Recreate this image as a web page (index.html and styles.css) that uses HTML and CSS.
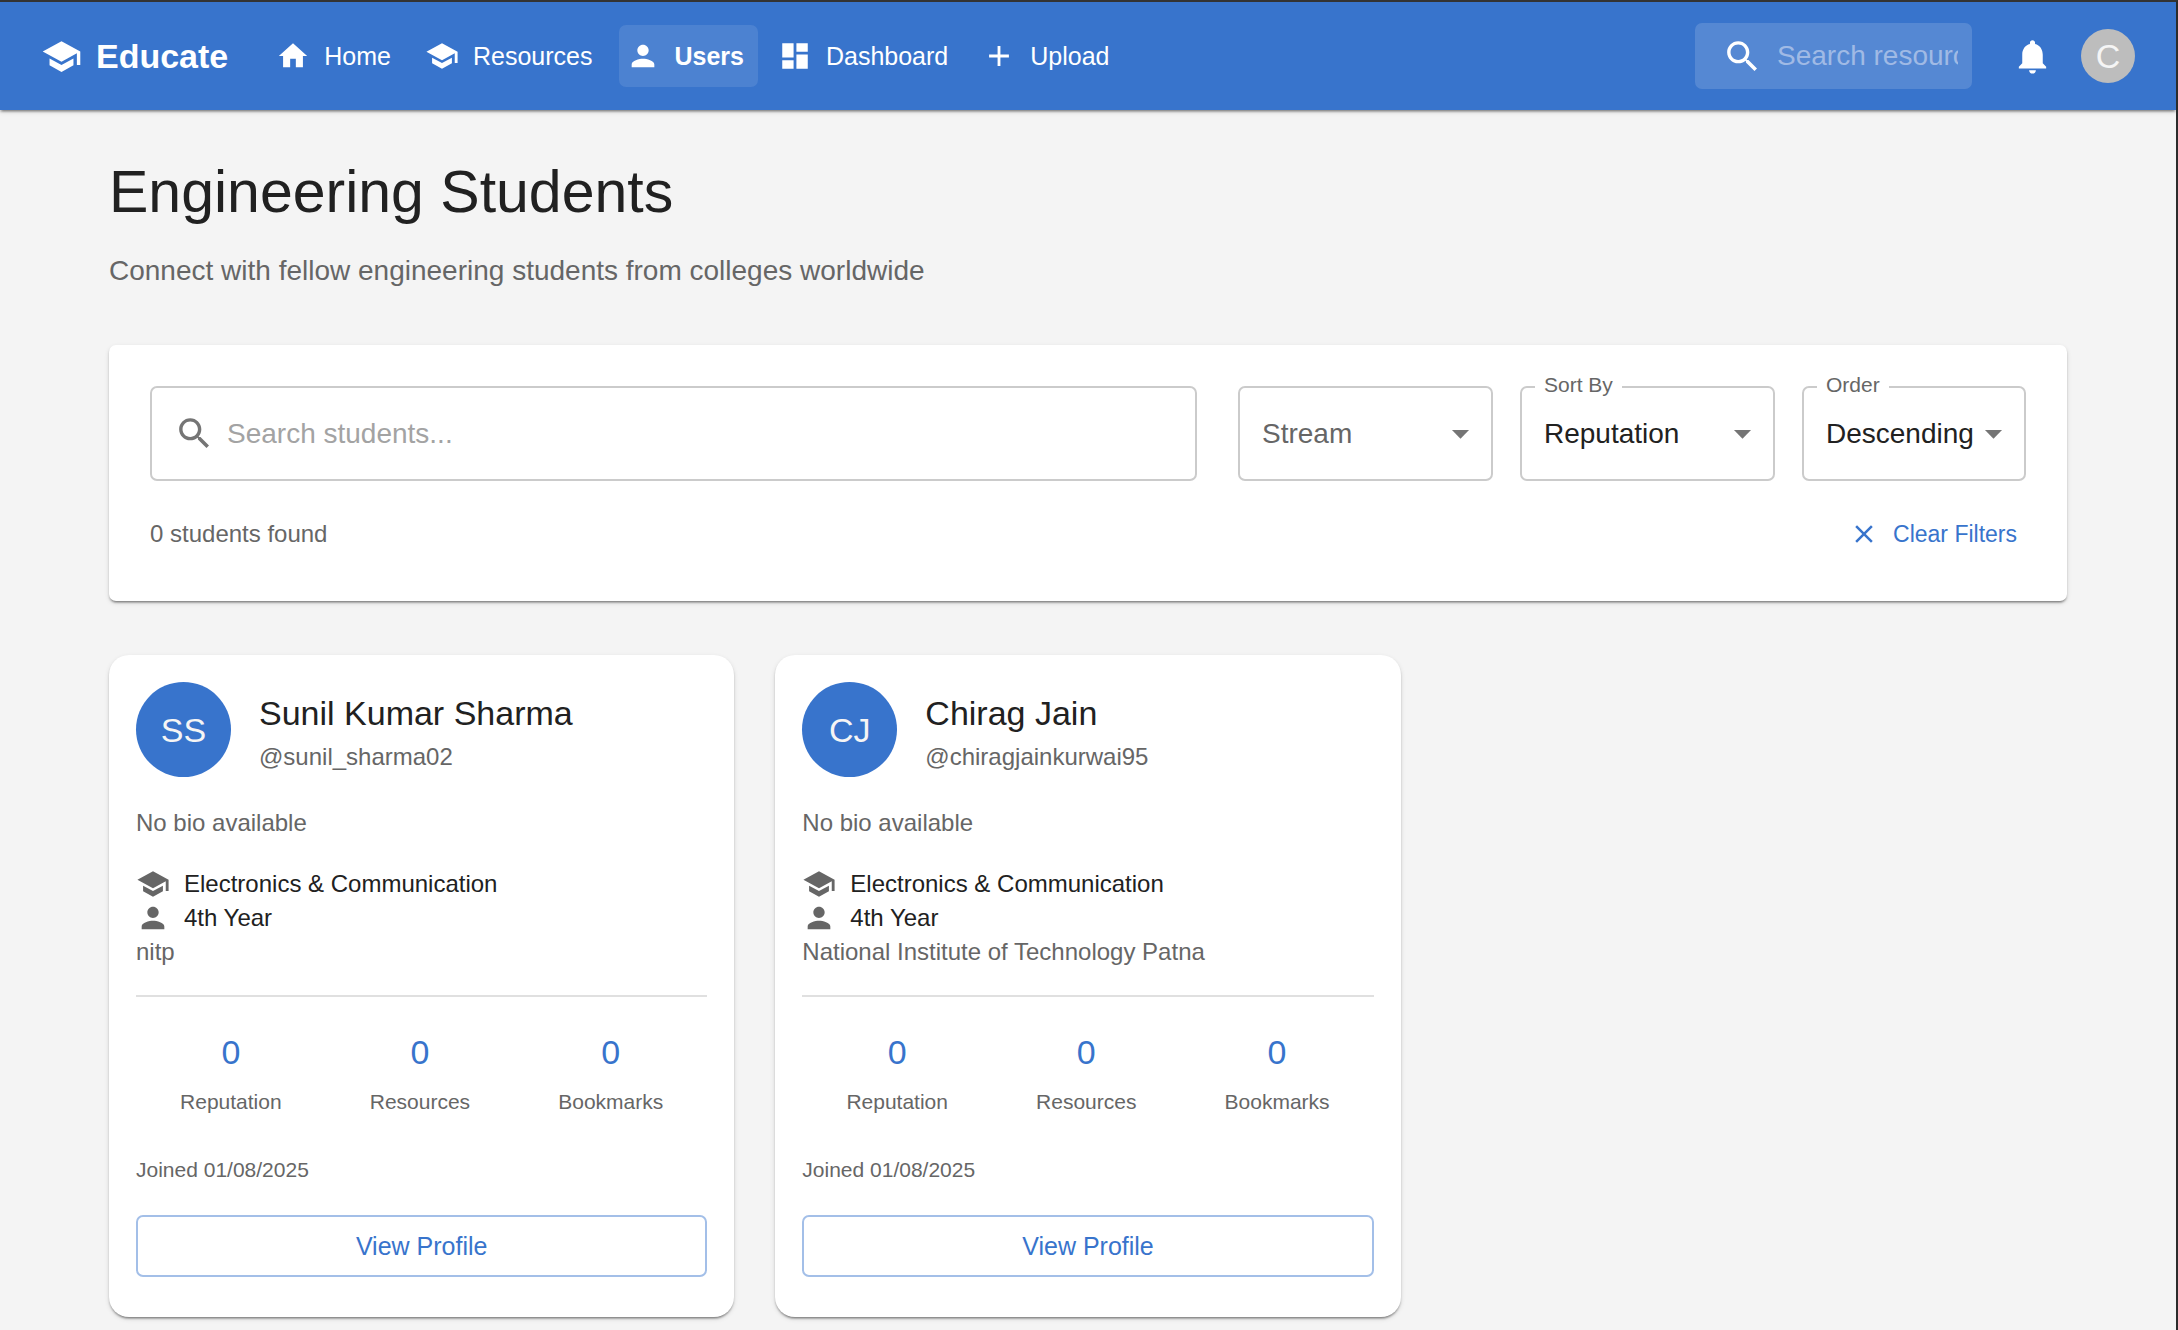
FILE: index.html
```html
<!DOCTYPE html>
<html lang="en">
<head>
<meta charset="utf-8">
<meta name="viewport" content="width=device-width, initial-scale=1">
<title>Educate - Engineering Students</title>
<link rel="stylesheet" href="styles.css">
</head>
<body>
<svg class="sprite" aria-hidden="true">
  <symbol id="school" viewBox="0 0 24 24"><path d="M5 13.18v4L12 21l7-3.82v-4L12 17l-7-3.82zM12 3 1 9l11 6 9-4.91V17h2V9L12 3z"/></symbol>
  <symbol id="home" viewBox="0 0 24 24"><path d="M10 20v-6h4v6h5v-8h3L12 3 2 12h3v8z"/></symbol>
  <symbol id="person" viewBox="0 0 24 24"><path d="M12 12c2.21 0 4-1.79 4-4s-1.79-4-4-4-4 1.79-4 4 1.79 4 4 4zm0 2c-2.67 0-8 1.34-8 4v2h16v-2c0-2.66-5.33-4-8-4z"/></symbol>
  <symbol id="dashboard" viewBox="0 0 24 24"><path d="M3 13h8V3H3v10zm0 8h8v-6H3v6zm10 0h8V11h-8v10zm0-18v6h8V3h-8z"/></symbol>
  <symbol id="add" viewBox="0 0 24 24"><path d="M19 13h-6v6h-2v-6H5v-2h6V5h2v6h6v2z"/></symbol>
  <symbol id="search" viewBox="0 0 24 24"><path d="M15.5 14h-.79l-.28-.27C15.41 12.59 16 11.11 16 9.5 16 5.91 13.09 3 9.5 3S3 5.91 3 9.5 5.91 16 9.5 16c1.61 0 3.09-.59 4.23-1.57l.27.28v.79l5 4.99L20.49 19l-4.99-5zm-6 0C7.01 14 5 11.99 5 9.5S7.01 5 9.5 5 14 7.01 14 9.5 11.99 14 9.5 14z"/></symbol>
  <symbol id="bell" viewBox="0 0 24 24"><path d="M12 22c1.1 0 2-.9 2-2h-4c0 1.1.89 2 2 2zm6-6v-5c0-3.07-1.64-5.64-4.5-6.32V4c0-.83-.67-1.5-1.5-1.5s-1.5.67-1.5 1.5v.68C7.63 5.36 6 7.92 6 11v5l-2 2v1h16v-1l-2-2z"/></symbol>
  <symbol id="clear" viewBox="0 0 24 24"><path d="M19 6.41 17.59 5 12 10.59 6.41 5 5 6.41 10.59 12 5 17.59 6.41 19 12 13.41 17.59 19 19 17.59 13.41 12z"/></symbol>
  <symbol id="caret" viewBox="0 0 24 24"><path d="m7 10 5 5 5-5z"/></symbol>
</svg>

<header class="appbar">
  <a class="brand" href="#"><svg class="icon icon-lg"><use href="#school"/></svg>Educate</a>
  <nav class="nav">
    <a class="nav-link" href="#"><svg class="icon"><use href="#home"/></svg>Home</a>
    <a class="nav-link" href="#"><svg class="icon"><use href="#school"/></svg>Resources</a>
    <a class="nav-link active" href="#" aria-current="page"><svg class="icon"><use href="#person"/></svg>Users</a>
    <a class="nav-link" href="#"><svg class="icon"><use href="#dashboard"/></svg>Dashboard</a>
    <a class="nav-link" href="#"><svg class="icon"><use href="#add"/></svg>Upload</a>
  </nav>
  <div class="appbar-tools">
    <label class="appbar-search"><svg class="icon icon-lg"><use href="#search"/></svg><input type="text" placeholder="Search resources..." aria-label="Search resources"></label>
    <button class="icon-button" type="button" aria-label="Notifications"><svg class="icon icon-lg"><use href="#bell"/></svg></button>
    <button class="account" type="button" aria-label="Account">C</button>
  </div>
</header>

<main class="container">
  <h1 class="title">Engineering Students</h1>
  <p class="subtitle">Connect with fellow engineering students from colleges worldwide</p>

  <form class="filters">
    <div class="filter-fields">
      <label class="search-field"><svg class="icon icon-lg"><use href="#search"/></svg><input type="text" placeholder="Search students..." aria-label="Search students"></label>
      <div class="select-group">
        <div class="select-field">
          <select class="empty" aria-label="Stream"><option>Stream</option></select>
          <svg class="icon icon-lg caret"><use href="#caret"/></svg>
        </div>
        <div class="select-field">
          <label class="floating-label" for="sort">Sort By</label>
          <select id="sort"><option>Reputation</option></select>
          <svg class="icon icon-lg caret"><use href="#caret"/></svg>
        </div>
        <div class="select-field">
          <label class="floating-label" for="order">Order</label>
          <select id="order"><option>Descending</option></select>
          <svg class="icon icon-lg caret"><use href="#caret"/></svg>
        </div>
      </div>
    </div>
    <div class="filter-summary">
      <p class="count">0 students found</p>
      <button class="clear" type="reset"><svg class="icon icon-sm"><use href="#clear"/></svg>Clear Filters</button>
    </div>
  </form>

  <section class="cards">
    <article class="card">
      <div class="card-head">
        <div class="avatar">SS</div>
        <div>
          <h2 class="name">Sunil Kumar Sharma</h2>
          <p class="muted">@sunil_sharma02</p>
        </div>
      </div>
      <p class="bio muted">No bio available</p>
      <p class="fact"><svg class="icon"><use href="#school"/></svg>Electronics &amp; Communication</p>
      <p class="fact"><svg class="icon"><use href="#person"/></svg>4th Year</p>
      <p class="muted">nitp</p>
      <hr class="divider">
      <dl class="stats">
        <div class="stat"><dt>Reputation</dt><dd>0</dd></div>
        <div class="stat"><dt>Resources</dt><dd>0</dd></div>
        <div class="stat"><dt>Bookmarks</dt><dd>0</dd></div>
      </dl>
      <p class="joined">Joined 01/08/2025</p>
      <button class="profile" type="button">View Profile</button>
    </article>

    <article class="card">
      <div class="card-head">
        <div class="avatar">CJ</div>
        <div>
          <h2 class="name">Chirag Jain</h2>
          <p class="muted">@chiragjainkurwai95</p>
        </div>
      </div>
      <p class="bio muted">No bio available</p>
      <p class="fact"><svg class="icon"><use href="#school"/></svg>Electronics &amp; Communication</p>
      <p class="fact"><svg class="icon"><use href="#person"/></svg>4th Year</p>
      <p class="muted">National Institute of Technology Patna</p>
      <hr class="divider">
      <dl class="stats">
        <div class="stat"><dt>Reputation</dt><dd>0</dd></div>
        <div class="stat"><dt>Resources</dt><dd>0</dd></div>
        <div class="stat"><dt>Bookmarks</dt><dd>0</dd></div>
      </dl>
      <p class="joined">Joined 01/08/2025</p>
      <button class="profile" type="button">View Profile</button>
    </article>
  </section>
</main>
</body>
</html>
```
FILE: styles.css
```css
:root {
  --primary: #3874cc;
  --text: #212121;
  --muted: #666666;
  --line: #cbcbcb;
  --shadow: 0 3px 2px -2px rgba(0, 0, 0, 0.3), 0 2px 2px 0 rgba(0, 0, 0, 0.18), 0 2px 5px 0 rgba(0, 0, 0, 0.12);
}

*,
*::before,
*::after {
  box-sizing: border-box;
}

body {
  margin: 0;
  min-height: 100vh;
  border-top: 2px solid #333333;
  border-right: 2px solid #2b2b2b;
  background: #f4f4f4;
  color: var(--text);
  font-family: "Liberation Sans", Arial, sans-serif;
  font-size: 24px;
  line-height: 34px;
}

h1, h2, p, dl, dd {
  margin: 0;
  font-weight: 400;
}

button, input, select {
  font: inherit;
  color: inherit;
}

button {
  cursor: pointer;
}

.sprite {
  display: none;
}

.icon {
  width: 34px;
  height: 34px;
  flex: none;
  fill: currentColor;
}

.icon-lg {
  width: 41px;
  height: 41px;
}

.icon-sm {
  width: 30px;
  height: 30px;
}

/* App bar */
.appbar {
  position: relative;
  display: flex;
  align-items: center;
  min-height: 108px;
  padding: 0 41px;
  background: var(--primary);
  color: #ffffff;
  box-shadow: var(--shadow);
}

.brand {
  display: flex;
  align-items: center;
  gap: 14px;
  margin-right: 41px;
  color: inherit;
  font-size: 34px;
  font-weight: 700;
  text-decoration: none;
}

.nav {
  display: flex;
  gap: 13px;
}

.nav-link {
  display: flex;
  align-items: center;
  gap: 14px;
  height: 62px;
  padding: 0 14px 0 7px;
  border-radius: 7px;
  color: inherit;
  font-size: 25px;
  text-decoration: none;
}

.nav-link.active {
  background: rgba(255, 255, 255, 0.1);
  font-weight: 700;
}

.appbar-tools {
  display: flex;
  align-items: center;
  margin-left: auto;
}

.appbar-search {
  display: flex;
  align-items: center;
  gap: 14px;
  width: 277px;
  height: 66px;
  margin-right: 26px;
  padding: 0 14px 0 27px;
  border-radius: 7px;
  background: rgba(255, 255, 255, 0.15);
}

.appbar-search input,
.search-field input {
  flex: 1;
  min-width: 0;
  padding: 0;
  border: 0;
  outline: 0;
  background: none;
  font-size: 28px;
}

.appbar-search input::placeholder {
  color: #a0bae5;
  opacity: 1;
}

.icon-button {
  display: flex;
  padding: 14px;
  border: 0;
  border-radius: 50%;
  background: none;
}

.account {
  width: 54px;
  height: 54px;
  margin-left: 14px;
  padding: 0;
  border: 0;
  border-radius: 50%;
  background: #bdbdbd;
  color: #f5f5f5;
  font-size: 34px;
}

/* Page */
.container {
  max-width: 2040px;
  margin: 0 auto;
  padding: 42px 41px 12px;
}

.title {
  margin-bottom: 18px;
  font-size: 59px;
  line-height: 80px;
}

.subtitle {
  margin-bottom: 54px;
  color: var(--muted);
  font-size: 28px;
  line-height: 41px;
}

/* Filters */
.filters {
  margin-bottom: 54px;
  padding: 41px;
  border-radius: 7px;
  background: #ffffff;
  box-shadow: var(--shadow);
}

.filter-fields {
  display: flex;
  gap: 41px;
}

.search-field {
  display: flex;
  flex: 1;
  align-items: center;
  gap: 12px;
  min-width: 0;
  height: 95px;
  padding: 0 22px;
  border: 2px solid var(--line);
  border-radius: 7px;
}

.search-field .icon {
  color: #757575;
}

.search-field input::placeholder {
  color: #a3a3a3;
  opacity: 1;
}

.select-group {
  display: grid;
  grid-template-columns: 255px 255px 224px;
  gap: 27px;
}

.select-field {
  position: relative;
}

.select-field select {
  width: 100%;
  height: 95px;
  padding: 0 22px;
  border: 2px solid var(--line);
  border-radius: 7px;
  appearance: none;
  background: none;
  font-size: 28px;
}

.select-field .empty {
  color: var(--muted);
}

.floating-label {
  position: absolute;
  top: -18px;
  left: 15px;
  padding: 0 9px;
  background: #ffffff;
  color: var(--muted);
  font-size: 21px;
}

.caret {
  position: absolute;
  top: 27px;
  right: 12px;
  color: #757575;
  pointer-events: none;
}

.filter-summary {
  display: flex;
  align-items: center;
  justify-content: space-between;
  margin-top: 27px;
}

.count {
  color: var(--muted);
}

.clear {
  display: flex;
  align-items: center;
  gap: 14px;
  height: 52px;
  padding: 0 9px;
  border: 0;
  background: none;
  color: var(--primary);
  font-size: 23px;
}

/* Student cards */
.cards {
  display: grid;
  grid-template-columns: repeat(3, 1fr);
  gap: 41px;
}

.card {
  padding: 27px 27px 40px;
  border-radius: 20px;
  background: #ffffff;
  box-shadow: var(--shadow);
}

.card-head {
  display: flex;
  align-items: center;
  gap: 28px;
  margin-bottom: 29px;
}

.avatar {
  display: flex;
  flex: none;
  align-items: center;
  justify-content: center;
  width: 95px;
  height: 95px;
  border-radius: 50%;
  background: var(--primary);
  color: #f5f5f5;
  font-size: 34px;
}

.name {
  font-size: 34px;
  line-height: 54px;
}

.muted {
  color: var(--muted);
}

.bio {
  margin-bottom: 27px;
}

.fact {
  display: flex;
  align-items: center;
  gap: 14px;
}

.fact .icon {
  color: var(--muted);
}

.divider {
  height: 2px;
  margin: 26px 0 28px;
  border: 0;
  background: #e0e0e0;
}

.stats {
  display: flex;
  justify-content: space-around;
  margin-bottom: 28px;
}

.stat {
  display: flex;
  flex-direction: column-reverse;
  text-align: center;
}

.stat dt {
  color: var(--muted);
  font-size: 21px;
  line-height: 46px;
}

.stat dd {
  color: var(--primary);
  font-size: 34px;
  line-height: 54px;
}

.joined {
  margin-bottom: 28px;
  color: var(--muted);
  font-size: 21px;
}

.profile {
  display: block;
  width: 100%;
  height: 62px;
  border: 2px solid #a3bfe8;
  border-radius: 7px;
  background: none;
  color: var(--primary);
  font-size: 25px;
}
```
